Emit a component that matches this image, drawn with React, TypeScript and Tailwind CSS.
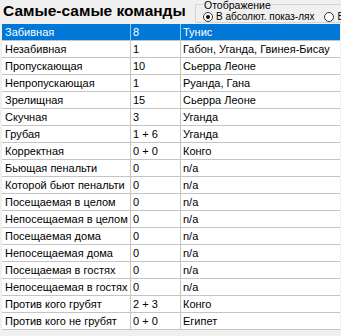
const rows: [string, string, string][] = [
  ['Забивная', '8', 'Тунис'],
  ['Незабивная', '1', 'Габон, Уганда, Гвинея-Бисау'],
  ['Пропускающая', '10', 'Сьерра Леоне'],
  ['Непропускающая', '1', 'Руанда, Гана'],
  ['Зрелищная', '15', 'Сьерра Леоне'],
  ['Скучная', '3', 'Уганда'],
  ['Грубая', '1 + 6', 'Уганда'],
  ['Корректная', '0 + 0', 'Конго'],
  ['Бьющая пенальти', '0', 'n/a'],
  ['Которой бьют пенальти', '0', 'n/a'],
  ['Посещаемая в целом', '0', 'n/a'],
  ['Непосещаемая в целом', '0', 'n/a'],
  ['Посещаемая дома', '0', 'n/a'],
  ['Непосещаемая дома', '0', 'n/a'],
  ['Посещаемая в гостях', '0', 'n/a'],
  ['Непосещаемая в гостях', '0', 'n/a'],
  ['Против кого грубят', '2 + 3', 'Конго'],
  ['Против кого не грубят', '0 + 0', 'Египет'],
]

export default function App() {
  return (
    <div
      className="w-[341px] h-[336px] bg-[#f0f0f0] overflow-hidden text-black"
      style={{ fontFamily: '"Liberation Sans", Arial, sans-serif' }}
    >
      {/* шапка */}
      <div className="flex h-[24px]">
        <h1 className="w-[195px] shrink-0 pl-[3px] pt-[2px] text-[15.5px] leading-[18px] font-bold whitespace-nowrap">
          Самые-самые команды
        </h1>
        {/* группа "Отображение" */}
        <div className="relative mt-[4px] h-[19px] flex-1 border border-r-0 border-[#d5d5d5]">
          <span className="absolute left-[7px] -top-[4px] bg-[#f0f0f0] px-[1px] text-[10.5px] leading-[9px] whitespace-nowrap">
            Отображение
          </span>
          <div className="flex items-center pl-[7px] pt-[6px] text-[10px] leading-[11px] whitespace-nowrap">
            <Radio checked />
            <span className="ml-[3px]">В абсолют. показ-лях</span>
            <span className="ml-[10px]">
              <Radio />
            </span>
            <span className="ml-[3px]">В</span>
          </div>
        </div>
      </div>

      {/* таблица */}
      <div className="ml-[2px] w-[338px] bg-white">
        {rows.map(([a, b, c], i) => {
          const sel = i === 0
          return (
            <div
              key={a}
              className={`grid grid-cols-[129px_50px_1fr] h-[17px] border-b border-[#c4c4c4] text-[11px] leading-[16px] ${
                sel ? 'bg-[#0078d7] text-white' : ''
              }`}
            >
              <div className={`pl-[3px] border-r whitespace-nowrap ${sel ? 'border-[#9cc6ec]' : 'border-[#c4c4c4]'}`}>{a}</div>
              <div className={`pl-[2px] border-r whitespace-nowrap ${sel ? 'border-[#9cc6ec]' : 'border-[#c4c4c4]'}`}>{b}</div>
              <div className="pl-[2px] whitespace-nowrap overflow-hidden">{c}</div>
            </div>
          )
        })}
      </div>
    </div>
  )
}

function Radio({ checked }: { checked?: boolean }) {
  return (
    <span className="w-[10px] h-[10px] shrink-0 rounded-full border border-[#333] bg-white flex items-center justify-center">
      {checked && <span className="w-[4px] h-[4px] rounded-full bg-[#111]" />}
    </span>
  )
}
